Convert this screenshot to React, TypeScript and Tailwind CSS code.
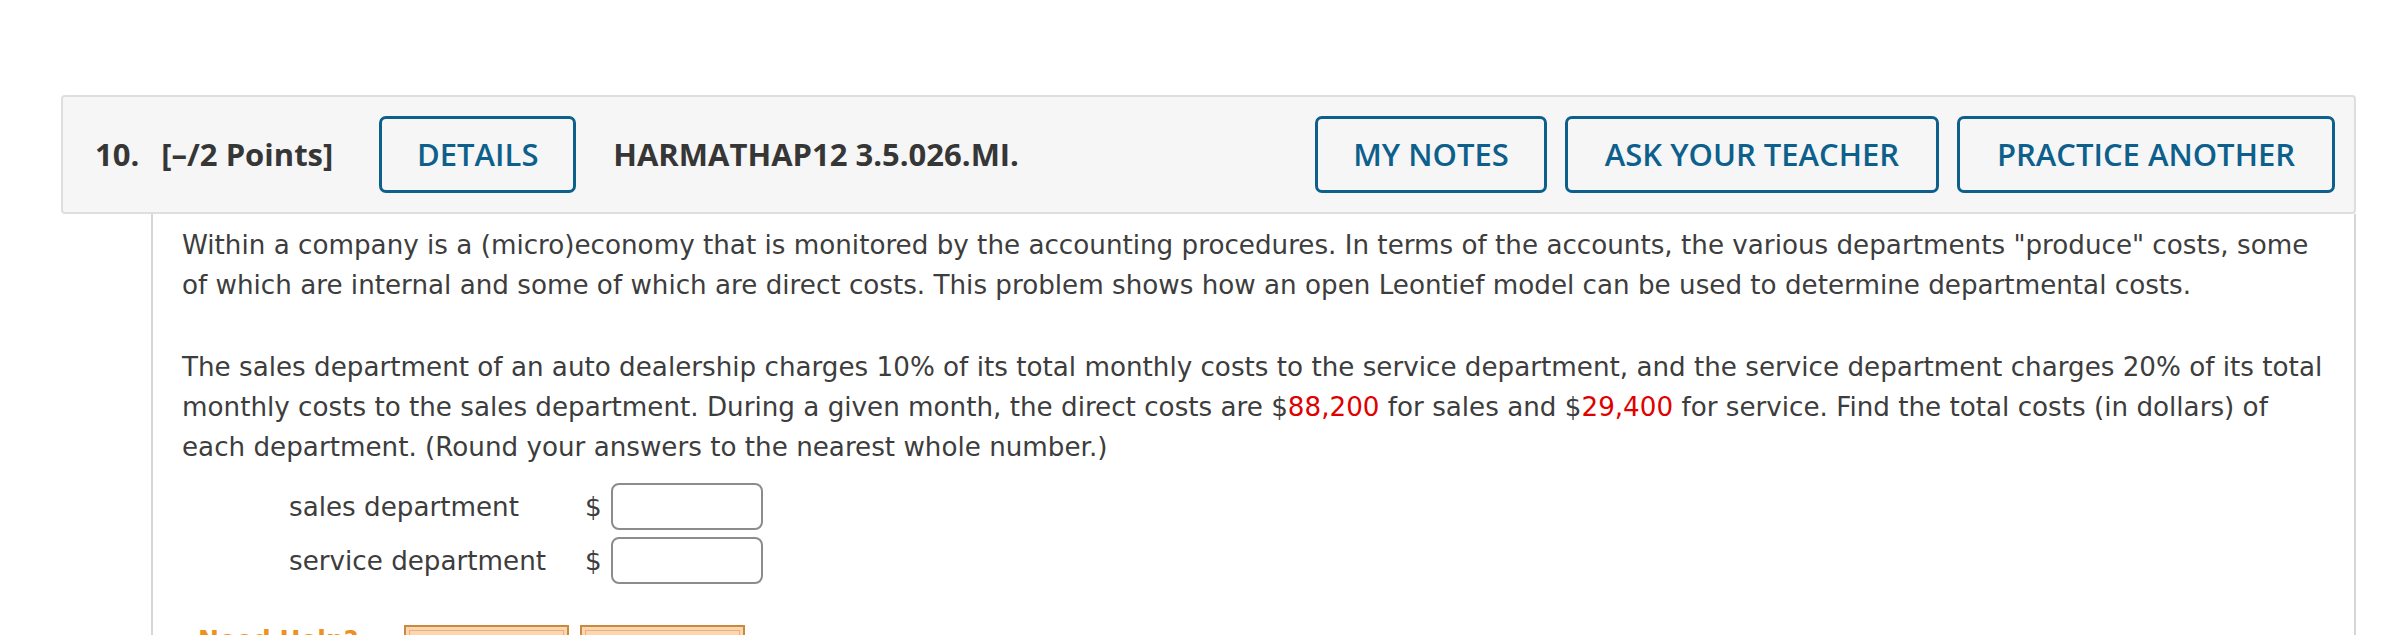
import React from "react";

const HeaderButton: React.FC<{ label: string; width: string }> = ({ label, width }) => (
  <button
    className={`${width} h-[77px] flex items-center justify-center border-[3px] border-[#0d5f8c] rounded-[7px] text-[31px] font-semibold text-[#0d5f8c] bg-transparent`}
  >
    {label}
  </button>
);

const AnswerRow: React.FC<{ label: string }> = ({ label }) => (
  <div className="flex items-center">
    <span className="ml-[107px] w-[296px] shrink-0 whitespace-nowrap">{label}</span>
    <span className="w-[26px] shrink-0">$</span>
    <input
      type="text"
      className="w-[152px] h-[47px] shrink-0 border-2 border-[#8c8c8c] rounded-[8px] bg-white outline-none"
    />
  </div>
);

const Red: React.FC<{ children: React.ReactNode }> = ({ children }) => (
  <span className="text-[#e00000]">{children}</span>
);

export default function App() {
  return (
    <div className="w-full h-[635px] overflow-hidden bg-white pt-[95px] pl-[61px] pr-[32px]">
      {/* Question header */}
      <div
        className="h-[119px] flex items-center border-2 border-[#dedede] bg-[#f6f6f6] rounded-[4px] pl-[32px] pr-[19px] text-[#363636]"
        style={{ fontFamily: '"Open Sans", sans-serif' }}
      >
        <span className="text-[31px] font-bold">10.</span>
        <span className="text-[31px] font-bold ml-[22px]">[–/2 Points]</span>
        <div className="ml-[46px]">
          <HeaderButton label="DETAILS" width="w-[197px]" />
        </div>
        <span className="text-[31px] font-bold ml-[37px]">HARMATHAP12 3.5.026.MI.</span>
        <div className="ml-auto flex gap-[18px]">
          <HeaderButton label="MY NOTES" width="w-[232px]" />
          <HeaderButton label="ASK YOUR TEACHER" width="w-[374px]" />
          <HeaderButton label="PRACTICE ANOTHER" width="w-[378px]" />
        </div>
      </div>

      {/* Question body */}
      <div
        className="ml-[90px] border-x-2 border-[#d6d6d6] pl-[29px] pr-[26px] pt-[11px] h-[500px] text-[26.2px] leading-[40px] text-[#3d3d3d]"
        style={{ fontFamily: '"DejaVu Sans", Verdana, sans-serif' }}
      >
        <p>
          Within a company is a (micro)economy that is monitored by the accounting procedures. In terms
          of the accounts, the various departments "produce" costs, some of which are internal and some
          of which are direct costs. This problem shows how an open Leontief model can be used to
          determine departmental costs.
        </p>
        <p className="mt-[42px]">
          The sales department of an auto dealership charges 10% of its total monthly costs to the
          service department, and the service department charges 20% of its total monthly costs to the
          sales department. During a given month, the direct costs are $<Red>88,200</Red> for sales and
          $<Red>29,400</Red> for service. Find the total costs (in dollars) of each department. (Round
          your answers to the nearest whole number.)
        </p>

        <div className="mt-[16px] flex flex-col gap-[7px]">
          <AnswerRow label="sales department" />
          <AnswerRow label="service department" />
        </div>

        <div className="mt-[41px] flex items-start">
          <span className="ml-[16px] w-[206px] shrink-0 text-[25px] leading-[30px] font-bold text-[#f0901e]">
            Need Help?
          </span>
          <button className="w-[165px] h-[44px] shrink-0 border-2 border-[#c98a3f] bg-[#fcd6ae] p-[3px]">
            <span className="block h-full border border-[#e9b27a] text-[22px] text-[#333]">Read It</span>
          </button>
          <button className="ml-[11px] w-[165px] h-[44px] shrink-0 border-2 border-[#c98a3f] bg-[#fcd6ae] p-[3px]">
            <span className="block h-full border border-[#e9b27a] text-[22px] text-[#333]">Watch It</span>
          </button>
        </div>
      </div>
    </div>
  );
}
